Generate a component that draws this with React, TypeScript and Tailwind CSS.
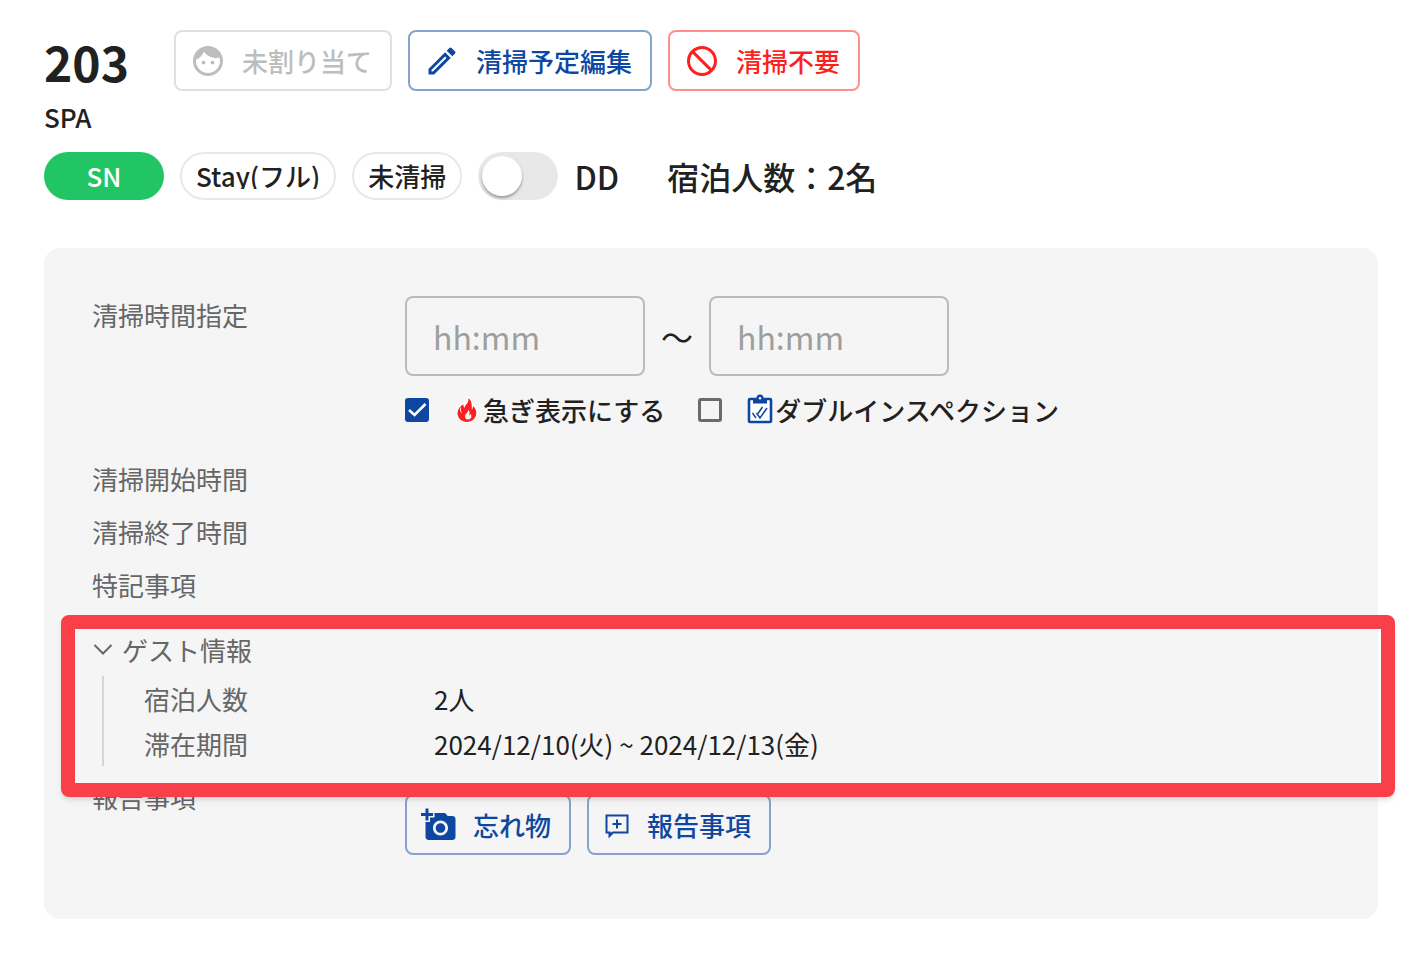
import React, { useState } from "react";
import { MdAddAPhoto, MdFace, MdNotInterested, MdOutlineModeEdit } from "react-icons/md";

interface ActionButtonProps {
  icon: React.ReactNode;
  label: string;
  className: string;
  disabled?: boolean;
}

const ActionButton: React.FC<ActionButtonProps> = ({
  icon,
  label,
  className,
  disabled,
}) => {
  return (
    <button
      type="button"
      disabled={disabled}
      className={`flex h-[61px] items-center gap-4 rounded-lg border-2 pl-3.5 pr-[18px] font-medium ${className}`}
    >
      {icon}
      <span>{label}</span>
    </button>
  );
};

const FireIcon = () => (
  <svg width="30" height="32" viewBox="0 0 30 32" aria-hidden="true">
    <path
      d="M15.5 4c.3 3.400-1.100 5.200-2.900 7.300-.6.7-.9 1.500-.9 2.500-1-.8-1.500-2-1.400-3.600C6.800 12.400 4.500 15.200 4.500 19c0 5.200 4.200 9 9.300 9 5.300 0 9.500-3.700 9.500-8.900 0-3.200-1.500-5.600-3.300-7.100.1 1.500-.3 2.700-1.200 3.500C18.900 10.600 18.700 6.500 15.500 4z"
      fill="#ff1f1f"
      stroke="#fff"
      strokeWidth="3"
      strokeLinejoin="round"
      paintOrder="stroke"
    />
    <path
      d="M15.300 15.500c.7 2.600-3.300 4-3.300 7 0 1.800 1.300 3 3 3 2 0 3.400-1.400 3.400-3.200 0-1-.3-1.800-.8-2.400-.2.9-.6 1.400-1.300 1.700.5-2.200.4-4.600-1-6.100z"
      fill="#f4f4f4"
    />
    <path d="M7.600 13.500c-.5 1.700-.2 3.600.9 5" stroke="#f4f4f4" fill="none" />
  </svg>
);

const ClipboardIcon = () => (
  <svg width="29" height="32" viewBox="0 0 29 32" aria-hidden="true">
    <rect x="3" y="5" width="22" height="23" rx="1" fill="#fff" stroke="#0d47a1" strokeWidth="2.600" />
    <path
      d="M7 4h3.500a3.500 3.500 0 0 1 7 0H21v5.500H7z"
      fill="#0d47a1"
    />
    <circle cx="14" cy="4.300" r="1.200" fill="#fff" />
    <path
      d="M10.500 19l3.500 5 7-10M6.500 19l3.500 5M12 19.500l4.500-6.500"
      fill="none"
      stroke="#0d47a1"
      strokeWidth="1.500"
    />
  </svg>
);

const AddCommentIcon = () => (
  <svg width="28" height="28" viewBox="0 0 28 28" aria-hidden="true">
    <path
      d="M3.500 4.500h21v17H10L6.500 25v-3.500h-3z"
      fill="none"
      stroke="#0d47a1"
      strokeWidth="2"
    />
    <path d="M6.500 21.500h4L6.500 25z" fill="#0d47a1" />
    <path d="M14 8.500v9M9.500 13h9" stroke="#0d47a1" strokeWidth="2" />
  </svg>
);

interface CheckProps {
  id: string;
  label: string;
  icon: React.ReactNode;
  checked: boolean;
  onChange: (value: boolean) => void;
}

const Check: React.FC<CheckProps> = ({ id, label, icon, checked, onChange }) => {
  return (
    <label htmlFor={id} className="flex h-10 items-center font-medium">
      <span className="relative mr-6 size-6">
        <input
          id={id}
          type="checkbox"
          checked={checked}
          onChange={(e) => onChange(e.target.checked)}
          className="block size-6 appearance-none rounded-[3px] border-3 border-[#6b6b6b] checked:border-[#0d47a1] checked:bg-[#0d47a1]"
        />
        {checked && (
          <svg className="pointer-events-none absolute inset-0" width="24" height="24" viewBox="0 0 24 24">
            <path d="M4 12l5.500 5L20.500 6" fill="none" stroke="#fff" strokeWidth="2.600" />
          </svg>
        )}
      </span>
      {icon}
      <span>{label}</span>
    </label>
  );
};

const TimeInput = ({ label }: { label: string }) => (
  <input
    type="text"
    aria-label={label}
    placeholder="hh:mm"
    className="h-20 w-60 rounded-lg border-2 border-[#bbb] bg-transparent px-[26px] text-[32px] placeholder:text-[#9e9e9e]"
  />
);

const blueButton = "border-[#86a3d0] text-[#0d47a1]";

export default function App() {
  const [dd, setDd] = useState(false);
  const [urgent, setUrgent] = useState(true);
  const [doubleCheck, setDoubleCheck] = useState(false);

  return (
    <main className="min-h-screen bg-white pb-[53px] pl-11 pr-7 pt-[30px] font-['Noto_Sans_CJK_JP',sans-serif] text-[26px] leading-10 text-[#212121]">
      <header>
        <div className="flex items-center gap-[45px]">
          <h1 className="text-5xl font-bold">203</h1>
          <div className="flex gap-4">
            <ActionButton
              disabled
              icon={<MdFace size={36} />}
              label="未割り当て"
              className="border-[#e0e0e0] text-[#bdbdbd]"
            />
            <ActionButton
              icon={<MdOutlineModeEdit size={36} />}
              label="清掃予定編集"
              className={blueButton}
            />
            <ActionButton
              icon={<MdNotInterested size={36} />}
              label="清掃不要"
              className="border-[#ff8f8f] text-[#ff1f1f]"
            />
          </div>
        </div>
        <p className="mt-1.5 font-medium">SPA</p>
        <div className="mt-[15px] flex items-center gap-4 font-medium">
          <span className="flex h-12 w-[120px] items-center justify-center rounded-full bg-[#22c563] text-white">
            SN
          </span>
          <span className="flex h-12 items-center rounded-full border-2 border-[#e8e8e8] px-3.5">
            <span className="overflow-hidden leading-[26px]">Stay(フル)</span>
          </span>
          <span className="flex h-12 items-center rounded-full border-2 border-[#e8e8e8] px-3.5">
            未清掃
          </span>
          <label className="flex items-center gap-4 text-[32px]">
            <input
              type="checkbox"
              role="switch"
              checked={dd}
              onChange={(e) => setDd(e.target.checked)}
              className="flex h-12 w-20 appearance-none items-center rounded-full bg-[#e8e8e8] px-1 before:size-10 before:rounded-full before:bg-white before:shadow-[0_2px_3px_rgba(0,0,0,0.35)] checked:justify-end checked:bg-[#0d47a1]"
            />
            DD
          </label>
          <span className="ml-8 text-[32px]">宿泊人数：2名</span>
        </div>
      </header>

      <section className="mt-12 rounded-2xl bg-[#f5f5f5] px-12 pb-16 pt-12 text-[#666]">
        <div className="flex">
          <h2 className="w-[313px] shrink-0 leading-[38px]">清掃時間指定</h2>
          <div className="text-[#212121]">
            <div className="flex items-center gap-4">
              <TimeInput label="開始" />
              <span className="text-[32px]">〜</span>
              <TimeInput label="終了" />
            </div>
            <div className="mt-3.5 flex gap-[33px]">
              <Check
                id="urgent"
                label="急ぎ表示にする"
                icon={<FireIcon />}
                checked={urgent}
                onChange={setUrgent}
              />
              <Check
                id="double"
                label="ダブルインスペクション"
                icon={<ClipboardIcon />}
                checked={doubleCheck}
                onChange={setDoubleCheck}
              />
            </div>
          </div>
        </div>
        <div className="mt-[29px] flex flex-col gap-[13px]">
          <h2>清掃開始時間</h2>
          <h2>清掃終了時間</h2>
          <h2>特記事項</h2>
        </div>

        <div className="relative mt-[22px]">
          <button type="button" aria-expanded="true" className="mb-1 flex h-[45px] items-center gap-2">
            <svg width="22" height="22" viewBox="0 0 22 22" aria-hidden="true">
              <path d="M2.500 6l8.500 8.500L19.500 6" fill="none" stroke="#666" strokeWidth="2" />
            </svg>
            ゲスト情報
          </button>
          <dl className="ml-2.5 border-l-2 border-[#d5d5d5] pl-10 leading-[45px]">
            <div className="flex">
              <dt className="w-[290px]">宿泊人数</dt>
              <dd className="text-[#212121]">2人</dd>
            </div>
            <div className="flex">
              <dt className="w-[290px]">滞在期間</dt>
              <dd className="text-[#212121]">2024/12/10(火) ~ 2024/12/13(金)</dd>
            </div>
          </dl>
          <div className="pointer-events-none absolute -bottom-[31px] -left-[31px] -right-[65px] -top-3 z-10 rounded-lg border-[14px] border-[#f93f4a] shadow-md" />
        </div>

        <div className="mt-[11px] flex">
          <h2 className="w-[313px] shrink-0">報告事項</h2>
          <div className="mt-[17px] flex gap-4">
            <ActionButton icon={<MdAddAPhoto size={36} />} label="忘れ物" className={blueButton} />
            <ActionButton icon={<AddCommentIcon />} label="報告事項" className={blueButton} />
          </div>
        </div>
      </section>
    </main>
  );
}
